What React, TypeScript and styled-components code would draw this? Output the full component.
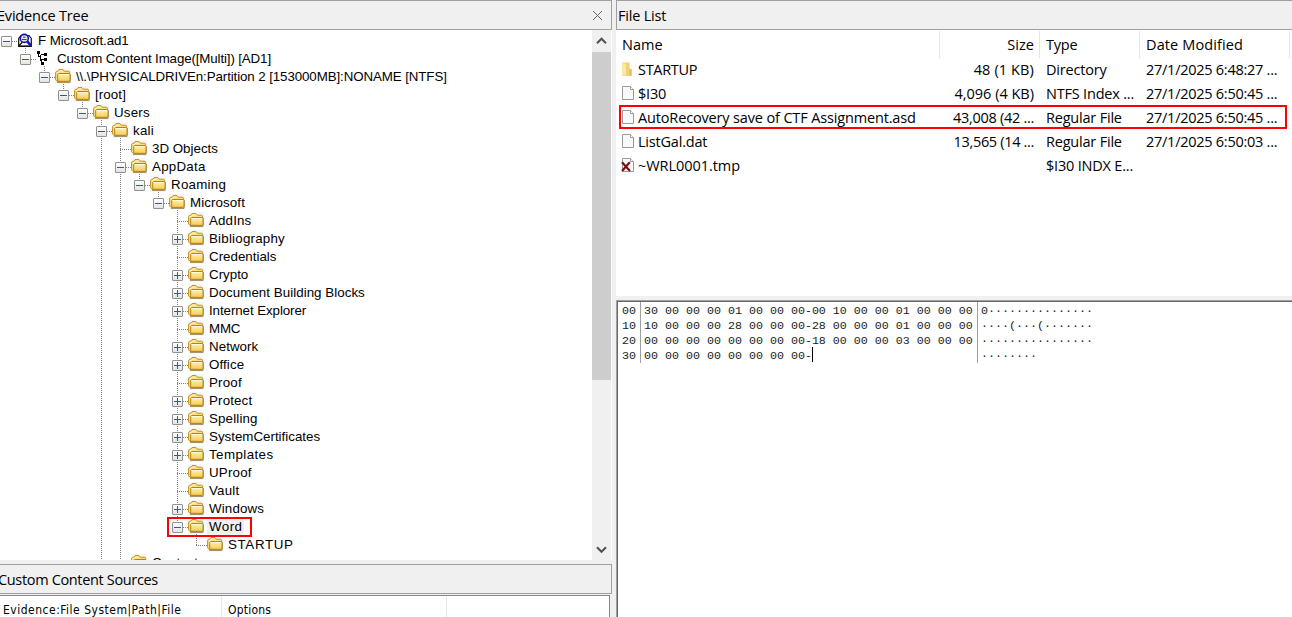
import React from "react";
import styled, { createGlobalStyle, css } from "styled-components";

const UI_FONT = `"Open Sans", "Noto Sans", sans-serif`;
const DOTS_V = "repeating-linear-gradient(to bottom, #808080 0 1px, transparent 1px 2px)";
const DOTS_H = "repeating-linear-gradient(to right, #808080 0 1px, transparent 1px 2px)";

const Global = createGlobalStyle`
  * { box-sizing: border-box; }
  body { margin: 0; background: #f0f0f0; overflow: hidden; color: #000; }
`;

const Window = styled.div`
  display: grid;
  grid-template-columns: 612px 1fr;
  column-gap: 4px;
  width: 100vw;
  height: 617px;
  background: #f0f0f0;
  overflow: hidden;
`;

const Column = styled.div`
  display: flex;
  flex-direction: column;
  min-width: 0;
  min-height: 0;
`;

const PanelHeader = styled.div<{ $open?: "left" | "right"; $indent: number }>`
  display: flex;
  align-items: center;
  justify-content: space-between;
  flex: none;
  height: 30px;
  padding: 0 8px 0 ${(p) => p.$indent}px;
  border: 1px solid #a0a0a0;
  ${(p) => (p.$open === "left" ? css`border-left: 0;` : css`border-right: 0;`)}
  background: #f0f0f0;
  white-space: nowrap;
  overflow: hidden;
`;

const PanelTitle = styled.span<{ $shift?: number; $spacing?: number }>`
  font: 14.5px/28px ${UI_FONT};
  letter-spacing: ${(p) => p.$spacing ?? -0.2}px;
  margin-left: ${(p) => p.$shift ?? 0}px;
  padding-top: 2px;
`;

/* ---------- evidence tree ---------- */

const TreePane = styled.div`
  display: flex;
  flex: none;
  height: 530px;
  background: #fff;
  padding-right: 1px;
  overflow: hidden;
`;

const TreeRows = styled.div`
  flex: 1;
  padding-top: 2px;
  overflow: hidden;
`;

const TreeRow = styled.div`
  display: flex;
  height: 18px;
`;

const Guide = styled.div<{ $on: boolean }>`
  flex: none;
  width: 19px;
  background: ${(p) => (p.$on ? DOTS_V : "none")} 6px 0 / 1px 18px no-repeat;
`;

const Branch = styled.div<{ $up: boolean; $down: boolean }>`
  flex: none;
  width: 17px;
  padding: 4px 0 0 1px;
  background:
    ${(p) => (p.$up ? DOTS_V : "none")} 6px 0 / 1px 10px no-repeat,
    ${(p) => (p.$down ? DOTS_V : "none")} 6px 10px / 1px 8px no-repeat,
    ${DOTS_H} 6px 9px / 11px 1px no-repeat;
`;

const Toggle = styled.div<{ $plus: boolean }>`
  width: 11px;
  height: 11px;
  border: 1px solid #919191;
  border-radius: 1px;
  background:
    linear-gradient(#3455a8, #3455a8) 1px 4px / 7px 1px no-repeat,
    ${(p) => (p.$plus ? "linear-gradient(#3455a8, #3455a8)" : "none")} 4px 1px / 1px 7px no-repeat,
    linear-gradient(#fff, #e4e4e4);
`;

const IconSlot = styled.div<{ $open: boolean; $tint: boolean }>`
  flex: none;
  width: 16px;
  height: 18px;
  background:
    ${(p) => (p.$open ? DOTS_V : "none")} 8px 16px / 1px 2px no-repeat,
    linear-gradient(${(p) => (p.$tint ? "#f7f7f7, #f7f7f7" : "#fff, #fff")}) 0 0 / 16px 16px no-repeat;
  svg { display: block; }
`;

const Label = styled.span<{ $selected: boolean; $spacing: number }>`
  margin-left: 3px;
  padding: 0 2px;
  height: 16px;
  margin-top: 1px;
  font: 13.33px/16px "Liberation Sans", Arial, sans-serif;
  letter-spacing: ${(p) => p.$spacing}px;
  white-space: pre;
  background: ${(p) => (p.$selected ? "#f0f0f0" : "transparent")};
`;

const ScrollBar = styled.div`
  display: flex;
  flex-direction: column;
  flex: none;
  width: 19px;
  background: #f0f0f0;
`;

const ScrollArrow = styled.div<{ $down?: boolean }>`
  display: grid;
  place-items: center;
  height: 22px;
  flex: none;
  padding-top: ${(p) => (p.$down ? 2 : 0)}px;
`;

const ScrollTrack = styled.div`
  flex: 1;
`;

const Thumb = styled.div`
  height: 328px;
  background: #cdcdcd;
`;

const Marker = styled.div<{ $x: number; $y: number; $w: number; $h: number }>`
  position: absolute;
  left: ${(p) => p.$x}px;
  top: ${(p) => p.$y}px;
  width: ${(p) => p.$w}px;
  height: ${(p) => p.$h}px;
  border: 2px solid #fe0000;
  pointer-events: none;
`;

/* ---------- content sources ---------- */

const Sources = styled.div`
  display: flex;
  flex: 1;
  margin: 1px 2px 0 0;
  padding-top: 1px;
  border-top: 1px solid #828790;
  border-right: 1px solid #828790;
  background: #fff;
`;

const SourceHead = styled.div<{ $w: number; $pad: number; $spacing: number }>`
  width: ${(p) => p.$w}px;
  padding: 1px 0 0 ${(p) => p.$pad}px;
  border-right: 1px solid #e5e5e5;
  font: 12px/24px "DejaVu Sans Condensed", "DejaVu Sans", sans-serif;
  font-stretch: condensed;
  letter-spacing: ${(p) => p.$spacing}px;
  white-space: nowrap;
`;

const Spacer = styled.div`
  flex: none;
  height: 4px;
`;

/* ---------- file list ---------- */

const FileTable = styled.div`
  flex: none;
  height: 266px;
  padding-top: 1px;
  background: #fff;
`;

const FileGrid = styled.div<{ $head?: boolean }>`
  display: grid;
  grid-template-columns: 324px 100px 100px 150px;
  height: ${(p) => (p.$head ? 26 : 24)}px;
  font: 14.5px/${(p) => (p.$head ? 27 : 26)}px ${UI_FONT};
`;

const Cell = styled.div<{ $right?: boolean; $head?: boolean; $spacing?: number }>`
  display: flex;
  justify-content: ${(p) => (p.$right ? "flex-end" : "flex-start")};
  padding: 0 5px 0 6px;
  border-right: 1px solid ${(p) => (p.$head ? "#e5e5e5" : "transparent")};
  letter-spacing: ${(p) => p.$spacing ?? -0.2}px;
  white-space: nowrap;
  svg { flex: none; margin: 4px 4px 0 -1px; }
`;

/* ---------- hex viewer ---------- */

const HexView = styled.div`
  display: flex;
  flex: 1;
  margin-top: 4px;
  border: solid #a0a0a0;
  border-width: 1px 0 0 1px;
  background: #fff;
  box-shadow: inset 1px 1px 0 #696969;
  padding: 1px 0 0 5px;
  color: #1c1c1c;
  font: 11.667px/15px "Liberation Mono", "Courier New", monospace;
  white-space: pre;
`;

const HexBlock = styled.div<{ $w?: number; $pad?: number; $rule?: boolean }>`
  height: 61px;
  padding-top: 1px;
  width: ${(p) => (p.$w ? `${p.$w}px` : "auto")};
  padding-left: ${(p) => p.$pad ?? 0}px;
  border-right: ${(p) => (p.$rule ? "1px solid #a0a0a0" : "0")};
`;

const HexLine = styled.div`
  display: flex;
  height: 15px;
  padding-top: 1px;
`;

const Caret = styled.span`
  width: 1px;
  height: 15px;
  margin-top: -2px;
  background: #000;
`;

/* ---------- icons ---------- */

const FolderIcon = () => (
  <svg width="16" height="16" viewBox="0 0 16 16">
    <defs>
      <linearGradient id="folderFront" x1="0" y1="0" x2="0" y2="1">
        <stop offset="0" stopColor="#fff3ae" />
        <stop offset="1" stopColor="#f3cb58" />
      </linearGradient>
    </defs>
    <path d="M2 14.5h13l.7-1V6" stroke="#8b7a50" fill="none" opacity=".8" />
    <path d="M2.2 13.5L.6 11.8V4.3l1-1h1L4 1.6h4l1.4 1.6h4.4l.8.9v9.4z" fill="#f9df86" stroke="#c28f1e" />
    <path d="M1.9 4.6h1.6L4.8 3h2.8" stroke="#fff6cc" fill="none" />
    <path d="M2.7 13.3V6.4l.9-.9h10.8l.6.7v5.9l-1 1.3z" fill="url(#folderFront)" stroke="#b98314" />
    <path d="M3.8 6.6h10" stroke="#fffbe0" />
  </svg>
);

const ImageIcon = () => (
  <svg width="16" height="16" viewBox="0 0 16 16">
    <path d="M1.7 14V6.5L4 3.5h8l2.3 3V14z" fill="#fff" stroke="#111" strokeWidth="1.2" />
    <path d="M1.7 14l3.8-4M1.2 14.3h13.6" stroke="#111" strokeWidth="1.3" />
    <circle cx="7.3" cy="6.4" r="4" fill="#e4e8f4" stroke="#1212b4" strokeWidth="1.6" />
    <path d="M5 7.5h4.6M6 5.2h2.6" stroke="#444" />
    <path d="M10.2 9.3l3.6 4" stroke="#1212b4" strokeWidth="2.6" />
  </svg>
);

const StructureIcon = () => (
  <svg width="16" height="16" viewBox="0 0 16 16" shapeRendering="crispEdges">
    <path d="M1 1h3v3H1zM8 3h3v3H8zM8 8h3v3H8zM5 12h3v3H5z" fill="#000" />
    <path d="M2.5 4v2.5h2M4.5 4.5h4M4.5 4.5v6M4.5 9.5h4M5.5 10v3" stroke="#000" fill="none" />
  </svg>
);

const FileIcon = ({ deleted = false }: { deleted?: boolean }) => (
  <svg width="13" height="16" viewBox="0 0 13 16">
    <path d="M1.5 1.5h8l3 3v10h-11z" fill="#f8f9f9" stroke="#9a9a9a" />
    <path d="M9.5 1.5v3h3" fill="#fff" stroke="#9a9a9a" />
    {deleted && <path d="M1 5.2l8 8.8M8.8 5.2L1 14" stroke="#7c0a10" strokeWidth="2.1" />}
  </svg>
);

const DirIcon = () => (
  <svg width="13" height="16" viewBox="0 0 13 16">
    <path d="M1 1.6h7.6V8h2v7H1z" fill="#f3d173" />
    <path d="M8.6 8h2v6.6h-2z" fill="#e6bb57" />
    <path d="M1 1.6l4 1.4v12L1 14.4z" fill="#fbe7a6" />
  </svg>
);

const Arrow = ({ down = false }: { down?: boolean }) => (
  <svg width="11" height="8" viewBox="0 0 11 8">
    <path d={down ? "M1 1.2l4.5 4.6L10 1.2" : "M1 6.3l4.5-4.6L10 6.3"} fill="none" stroke="#505050" strokeWidth="2" />
  </svg>
);

const CloseIcon = () => (
  <svg width="11" height="11" viewBox="0 0 11 11">
    <path d="M1 1l9 9M10 1l-9 9" stroke="#666" />
  </svg>
);

/* ---------- data ---------- */

type ToggleState = "+" | "-" | "";
interface TreeItem {
  level: number;
  name: string;
  toggle: ToggleState;
  spacing: number;
  kind?: "image" | "structure";
}

const node = (name: string, toggle: ToggleState = "", spacing = 0, level = 9): TreeItem => ({
  level,
  name,
  toggle,
  spacing,
});

const tree: TreeItem[] = [
  { level: 0, name: "F Microsoft.ad1", toggle: "-", kind: "image", spacing: -0.08 },
  { level: 1, name: "Custom Content Image([Multi]) [AD1]", toggle: "-", kind: "structure", spacing: -0.13 },
  node("\\\\.\\PHYSICALDRIVEn:Partition 2 [153000MB]:NONAME [NTFS]", "-", -0.1, 2),
  node("[root]", "-", 0.1, 3),
  node("Users", "-", 0.2, 4),
  node("kali", "-", 0.25, 5),
  node("3D Objects", "", 0, 6),
  node("AppData", "-", 0.25, 6),
  node("Roaming", "-", 0.25, 7),
  node("Microsoft", "-", 0.1, 8),
  node("AddIns", "", 0.15),
  node("Bibliography", "+", 0.22),
  node("Credentials"),
  node("Crypto", "+"),
  node("Document Building Blocks", "+", 0.04),
  node("Internet Explorer", "+", -0.08),
  node("MMC", "", -0.2),
  node("Network", "+", 0.05),
  node("Office", "+", 0.1),
  node("Proof", "", 0.2),
  node("Protect", "+", 0.15),
  node("Spelling", "+", 0.15),
  node("SystemCertificates", "+"),
  node("Templates", "+", 0.42),
  node("UProof", "", 0.2),
  node("Vault", "", 0.2),
  node("Windows", "+", 0.15),
  node("Word", "-", 0.45),
  node("STARTUP", "", 0.65, 10),
  node("Contacts", "", 0, 6),
];

/* Levels 5 and 6 have further siblings below the visible part of the tree. */
const continues = (index: number, level: number) => {
  if (level === 5 || level === 6) return index >= level;
  for (let i = index + 1; i < tree.length; i++) {
    if (tree[i].level < level) return false;
    if (tree[i].level === level) return true;
  }
  return false;
};

const files = [
  { name: "STARTUP", size: "48 (1 KB)", type: "Directory", date: "27/1/2025 6:48:27 ...", icon: <DirIcon />, ns: -0.3, ss: 0.12 },
  { name: "$I30", size: "4,096 (4 KB)", type: "NTFS Index ...", date: "27/1/2025 6:50:45 ...", icon: <FileIcon />, ns: -0.2, ss: 0 },
  { name: "AutoRecovery save of CTF Assignment.asd", size: "43,008 (42 ...", type: "Regular File", date: "27/1/2025 6:50:45 ...", icon: <FileIcon />, ns: -0.15, ss: -0.28 },
  { name: "ListGal.dat", size: "13,565 (14 ...", type: "Regular File", date: "27/1/2025 6:50:03 ...", icon: <FileIcon />, ns: -0.2, ss: -0.33 },
  { name: "~WRL0001.tmp", size: "", type: "$I30 INDX E...", date: "", icon: <FileIcon deleted />, ns: -0.05, ss: 0 },
];

const hex = [
  ["00", "30 00 00 00 01 00 00 00-00 10 00 00 01 00 00 00", "0···············"],
  ["10", "10 00 00 00 28 00 00 00-28 00 00 00 01 00 00 00", "····(···(·······"],
  ["20", "00 00 00 00 00 00 00 00-18 00 00 00 03 00 00 00", "················"],
  ["30", "00 00 00 00 00 00 00 00-", "········"],
];

export default function App() {
  return (
    <>
      <Global />
      <Window>
        <Column>
          <PanelHeader $open="left" $indent={0}>
            <PanelTitle $shift={-3}>Evidence Tree</PanelTitle>
            <CloseIcon />
          </PanelHeader>
          <TreePane>
            <TreeRows>
              {tree.map((item, i) => (
                <TreeRow key={i}>
                  {Array.from({ length: item.level }, (_, l) => (
                    <Guide key={l} $on={continues(i, l)} />
                  ))}
                  <Branch $up={item.level > 0} $down={continues(i, item.level)}>
                    {item.toggle && <Toggle $plus={item.toggle === "+"} />}
                  </Branch>
                  <IconSlot $open={item.toggle === "-"} $tint={!item.kind}>
                    {item.kind === "image" ? <ImageIcon /> : item.kind === "structure" ? <StructureIcon /> : <FolderIcon />}
                  </IconSlot>
                  <Label $selected={item.name === "Word"} $spacing={item.spacing}>
                    {item.name}
                  </Label>
                </TreeRow>
              ))}
            </TreeRows>
            <ScrollBar>
              <ScrollArrow><Arrow /></ScrollArrow>
              <ScrollTrack><Thumb /></ScrollTrack>
              <ScrollArrow $down><Arrow down /></ScrollArrow>
            </ScrollBar>
          </TreePane>
          <Spacer />
          <PanelHeader $open="left" $indent={0}>
            <PanelTitle $shift={-2} $spacing={-0.34}>Custom Content Sources</PanelTitle>
          </PanelHeader>
          <Sources>
            <SourceHead $w={222} $pad={3} $spacing={0.5}>Evidence:File System|Path|File</SourceHead>
            <SourceHead $w={225} $pad={6} $spacing={0.2}>Options</SourceHead>
          </Sources>
        </Column>
        <Column>
          <PanelHeader $open="right" $indent={1}>
            <PanelTitle>File List</PanelTitle>
          </PanelHeader>
          <FileTable>
            <FileGrid $head>
              <Cell $head $spacing={0}>Name</Cell>
              <Cell $head $right $spacing={0.05}>Size</Cell>
              <Cell $head>Type</Cell>
              <Cell $head $spacing={0.12}>Date Modified</Cell>
            </FileGrid>
            {files.map((f) => (
              <FileGrid key={f.name}>
                <Cell $spacing={f.ns}>{f.icon}{f.name}</Cell>
                <Cell $right $spacing={f.ss}>{f.size}</Cell>
                <Cell>{f.type}</Cell>
                <Cell $spacing={-0.26}>{f.date}</Cell>
              </FileGrid>
            ))}
          </FileTable>
          <HexView>
            <HexBlock $w={19} $rule>
              {hex.map((h) => <HexLine key={h[0]}>{h[0]}</HexLine>)}
            </HexBlock>
            <HexBlock $w={337} $pad={3} $rule>
              {hex.map((h, i) => <HexLine key={h[0]}>{h[1]}{i === 3 && <Caret />}</HexLine>)}
            </HexBlock>
            <HexBlock $pad={3}>
              {hex.map((h) => <HexLine key={h[0]}>{h[2]}</HexLine>)}
            </HexBlock>
          </HexView>
        </Column>
      </Window>
      <Marker $x={167} $y={517} $w={85} $h={20} />
      <Marker $x={619} $y={105} $w={668} $h={24} />
    </>
  );
}
